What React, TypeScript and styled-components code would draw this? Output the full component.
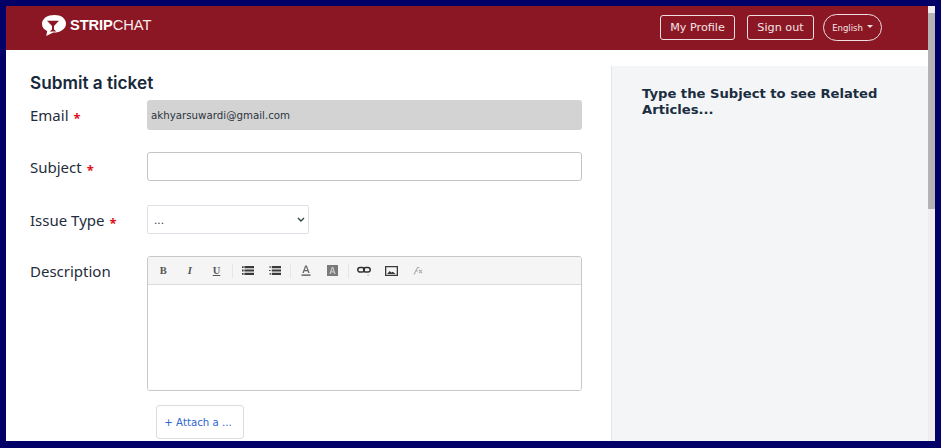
import React from "react";
import styled, { createGlobalStyle } from "styled-components";

const Global = createGlobalStyle`
  html, body { margin: 0; padding: 0; height: 100%; overflow: hidden; background: #000066; }
  * { box-sizing: border-box; }
`;

const Frame = styled.div`
  width: 941px;
  height: 448px;
  background: #000066;
  padding: 6px 6px 7px 6px;
`;

const Viewport = styled.div`
  position: relative;
  height: 100%;
  overflow: hidden;
  background: #fff;
  padding-right: 7px;
  font-family: "DejaVu Sans", sans-serif;
  color: #1b2a3a;
`;

const Header = styled.header`
  height: 44px;
  background: #8c1724;
  display: flex;
  align-items: center;
  justify-content: space-between;
  padding: 0 46px 0 36px;
`;

const Logo = styled.div`
  display: flex;
  align-items: center;
  gap: 4px;
  color: #fff;
  font-family: "Liberation Sans", sans-serif;
  font-size: 14.7px;
  letter-spacing: -0.1px;
  margin-top: -6px;
`;

const LogoStrong = styled.span`
  font-weight: 700;
`;

const LogoLight = styled.span`
  font-weight: 400;
  opacity: 0.92;
`;

const Nav = styled.nav`
  display: flex;
  align-items: center;
  gap: 12px;
  margin-top: -1px;
`;

const NavButton = styled.button<{ $width: number }>`
  height: 25px;
  width: ${(p) => p.$width}px;
  padding: 0;
  background: transparent;
  border: 1.5px solid #f0dfe1;
  border-radius: 3px;
  color: #f3e3e5;
  font-family: "DejaVu Sans", sans-serif;
  font-size: 11.2px;
  line-height: 1;
`;

const LangButton = styled.button`
  height: 27px;
  width: 59px;
  margin-left: -3px;
  background: transparent;
  border: 1.5px solid #f0dfe1;
  border-radius: 14px;
  color: #f3e3e5;
  font-family: "DejaVu Sans", sans-serif;
  font-size: 8.5px;
  display: flex;
  align-items: center;
  justify-content: center;
  gap: 4px;
  padding: 0;
  &::after {
    content: "";
    border-top: 3px solid #f3e3e5;
    border-left: 3px solid transparent;
    border-right: 3px solid transparent;
    margin-top: -2px;
  }
`;

const Main = styled.main`
  display: flex;
  align-items: stretch;
  height: 400px;
`;

const Content = styled.section`
  width: 605px;
  flex: none;
  padding: 23px 29px 0 24px;
`;

const Title = styled.h1`
  margin: 0 0 7px;
  font-family: "Inter", sans-serif;
  font-size: 17.2px;
  line-height: 20px;
  font-weight: 600;
  color: #17283a;
`;

const Row = styled.div<{ $gap: number }>`
  display: flex;
  align-items: flex-start;
  margin-bottom: ${(p) => p.$gap}px;
`;

const Label = styled.label`
  width: 117px;
  height: 30px;
  flex: none;
  font-family: "Noto Sans", sans-serif;
  font-size: 15px;
  line-height: 30px;
  color: #1f2d3c;
`;

const Star = styled.span`
  color: #e01020;
  font-size: 13px;
  font-weight: 700;
  margin-left: 5px;
  vertical-align: -2px;
`;

const ReadOnly = styled.div`
  width: 435px;
  height: 30px;
  background: #d3d3d3;
  border-radius: 3px;
  padding: 0 4px;
  font-family: "DejaVu Sans", sans-serif;
  font-size: 10.25px;
  line-height: 31px;
  color: #2b3440;
`;

const TextInput = styled.input`
  display: block;
  width: 435px;
  height: 29px;
  background: #fff;
  border: 1px solid #c4c4c4;
  border-radius: 3px;
  outline: none;
`;

const SelectBox = styled.select`
  display: block;
  width: 162px;
  height: 29px;
  appearance: none;
  background: #fff url("data:image/svg+xml,%3Csvg xmlns='http://www.w3.org/2000/svg' width='8' height='5'%3E%3Cpath d='M1 1l3 3 3-3' fill='none' stroke='%23344' stroke-width='1.4'/%3E%3C/svg%3E") no-repeat right 3px center;
  border: 1px solid #dde2e8;
  border-radius: 2px;
  padding: 0 6px;
  font-family: "DejaVu Sans", sans-serif;
  font-size: 10.5px;
  color: #2b3440;
  outline: none;
`;

const Editor = styled.div`
  width: 435px;
  height: 135px;
  border: 1px solid #c8c8c8;
  border-radius: 3px;
  display: flex;
  flex-direction: column;
  overflow: hidden;
`;

const Toolbar = styled.div`
  height: 28px;
  flex: none;
  background: #f5f5f5;
  border-bottom: 1px solid #dcdcdc;
  display: flex;
  align-items: center;
`;

const ToolGroup = styled.div`
  display: flex;
  align-items: center;
  padding: 0 2px;
  height: 14px;
  & + & {
    border-left: 1px solid #e6e6e6;
  }
`;

const Tool = styled.span`
  width: 26.6px;
  height: 14px;
  display: flex;
  align-items: center;
  justify-content: center;
  color: #555;
`;

const Letter = styled.span<{ $italic?: boolean; $underline?: boolean }>`
  font-family: "Liberation Serif", serif;
  font-size: 10.5px;
  font-weight: 700;
  color: #555;
  font-style: ${(p) => (p.$italic ? "italic" : "normal")};
  text-decoration: ${(p) => (p.$underline ? "underline" : "none")};
`;

const EditorBody = styled.div`
  flex: 1;
  background: #fff;
`;

const AttachRow = styled.div`
  padding-left: 126px;
  margin-top: 14px;
`;

const AttachButton = styled.button`
  width: 88px;
  height: 34px;
  background: #fff;
  border: 1px solid #dcdcdc;
  border-radius: 3px;
  padding: 0 4px 0 0;
  color: #2f66d0;
  font-family: "DejaVu Sans", sans-serif;
  font-size: 10.2px;
`;

const Sidebar = styled.aside`
  flex: 1;
  margin-top: 16px;
  background: #f4f5f7;
  border-left: 1px solid #e3e7ec;
  border-top-right-radius: 3px;
  padding: 20px 30px;
`;

const SideTitle = styled.h2`
  margin: 0;
  font-family: "DejaVu Sans", sans-serif;
  font-size: 13.15px;
  line-height: 16px;
  font-weight: 700;
  color: #1b2d40;
`;

const Scrollbar = styled.div`
  position: absolute;
  top: 0;
  right: 0;
  bottom: 0;
  width: 7px;
  background: #eeeeee;
`;

const Thumb = styled.div`
  margin-top: 7px;
  height: 196px;
  background: #b4b4b4;
`;

const LogoMark = () => (
  <svg width="24" height="21" viewBox="0 0 24 21" aria-hidden="true">
    <path
      fill="#fff"
      d="M12.5 0C5.6 0 0 3.4 0 8.8c0 3.4 2 5.9 5.2 7.2L4.2 21l7-3.4C18.6 17.6 24 14 24 8.8 24 3.4 19 0 12.5 0z"
    />
    <path fill="#8c1724" d="M5 5.8h12l-5 5.2v3.6l2.4 1.8H7.6l2.4-1.8V11z" />
  </svg>
);

const IconList = () => (
  <svg width="12" height="9" viewBox="0 0 12 9">
    <path fill="#3a3a3a" d="M0 .3h1.6v1.8H0zM2.4 0H12v2.2H2.4zM0 3.6h1.6v1.8H0zM2.4 3.4H12v2.2H2.4zM0 6.9h1.6v1.8H0zM2.4 6.8H12V9H2.4z" />
  </svg>
);

const IconOrdered = () => (
  <svg width="12" height="9" viewBox="0 0 12 9">
    <path fill="#3a3a3a" d="M.6 0h1v2h-1zM2.8 0H12v2.2H2.8zM0 4h1.6v1H0zM2.8 3.4H12v2.2H2.8zM.6 7h1.2v1.8H.6zM2.8 6.8H12V9H2.8z" />
  </svg>
);

const IconTextColor = () => (
  <svg width="10" height="11" viewBox="0 0 10 11">
    <path fill="#666" d="M4.2 0.5h1.6L8.6 8H7.2l-.6-1.8H3.4L2.8 8H1.4zM3.8 5h2.4L5 1.8z" />
    <rect x="0.5" y="9.5" width="9" height="1.2" fill="#444" />
  </svg>
);

const IconBackColor = () => (
  <svg width="11" height="11" viewBox="0 0 11 11">
    <rect width="11" height="11" fill="#7a7a7a" />
    <path fill="#c8c8c8" d="M4.7 2L2.4 9h1.4l.5-1.6h2.4L7.2 9h1.4L6.3 2zM4.6 6.3l.9-2.8.9 2.8z" />
  </svg>
);

const IconLink = () => (
  <svg width="14" height="10" viewBox="0 0 14 10">
    <g fill="none" stroke="#333" strokeWidth="1.5">
      <rect x="0.8" y="1.5" width="6.6" height="4.6" rx="2.3" />
      <rect x="6.6" y="1.5" width="6.6" height="4.6" rx="2.3" />
    </g>
    <rect x="10.5" y="8.6" width="1.2" height="1" fill="#999" />
  </svg>
);

const IconPicture = () => (
  <svg width="13" height="10" viewBox="0 0 13 10">
    <path
      fillRule="evenodd"
      fill="#3a3a3a"
      d="M0 0h13v10H0zM1.3 1.3v7.4h10.4V1.3zM2.2 8l2.4-3 1.8 1.6 1.4-.8 2.8 2.2z"
    />
  </svg>
);

const IconClear = () => (
  <svg width="10" height="9" viewBox="0 0 10 9">
    <path fill="none" stroke="#b0b0b0" strokeWidth="1.2" d="M1 8.5L4.5 1.5h2M3 5h2M6 4l3 3M9 4L6 7" />
  </svg>
);

export default function App() {
  return (
    <>
      <Global />
      <Frame>
        <Viewport>
          <Header>
            <Logo>
              <LogoMark />
              <span>
                <LogoStrong>STRIP</LogoStrong>
                <LogoLight>CHAT</LogoLight>
              </span>
            </Logo>
            <Nav>
              <NavButton $width={75}>My Profile</NavButton>
              <NavButton $width={67}>Sign out</NavButton>
              <LangButton>English</LangButton>
            </Nav>
          </Header>
          <Main>
            <Content>
              <Title>Submit a ticket</Title>
              <Row $gap={22}>
                <Label>
                  Email<Star>*</Star>
                </Label>
                <ReadOnly>akhyarsuwardi@gmail.com</ReadOnly>
              </Row>
              <Row $gap={23}>
                <Label>
                  Subject<Star>*</Star>
                </Label>
                <TextInput type="text" />
              </Row>
              <Row $gap={21}>
                <Label>
                  Issue Type<Star>*</Star>
                </Label>
                <SelectBox defaultValue="none">
                  <option value="none">...</option>
                </SelectBox>
              </Row>
              <Row $gap={0}>
                <Label>Description</Label>
                <Editor>
                  <Toolbar>
                    <ToolGroup>
                      <Tool><Letter>B</Letter></Tool>
                      <Tool><Letter $italic>I</Letter></Tool>
                      <Tool><Letter $underline>U</Letter></Tool>
                    </ToolGroup>
                    <ToolGroup>
                      <Tool><IconList /></Tool>
                      <Tool><IconOrdered /></Tool>
                    </ToolGroup>
                    <ToolGroup>
                      <Tool><IconTextColor /></Tool>
                      <Tool><IconBackColor /></Tool>
                    </ToolGroup>
                    <ToolGroup>
                      <Tool><IconLink /></Tool>
                      <Tool><IconPicture /></Tool>
                      <Tool><IconClear /></Tool>
                    </ToolGroup>
                  </Toolbar>
                  <EditorBody />
                </Editor>
              </Row>
              <AttachRow>
                <AttachButton>+ Attach a ...</AttachButton>
              </AttachRow>
            </Content>
            <Sidebar>
              <SideTitle>Type the Subject to see Related Articles...</SideTitle>
            </Sidebar>
          </Main>
          <Scrollbar>
            <Thumb />
          </Scrollbar>
        </Viewport>
      </Frame>
    </>
  );
}
